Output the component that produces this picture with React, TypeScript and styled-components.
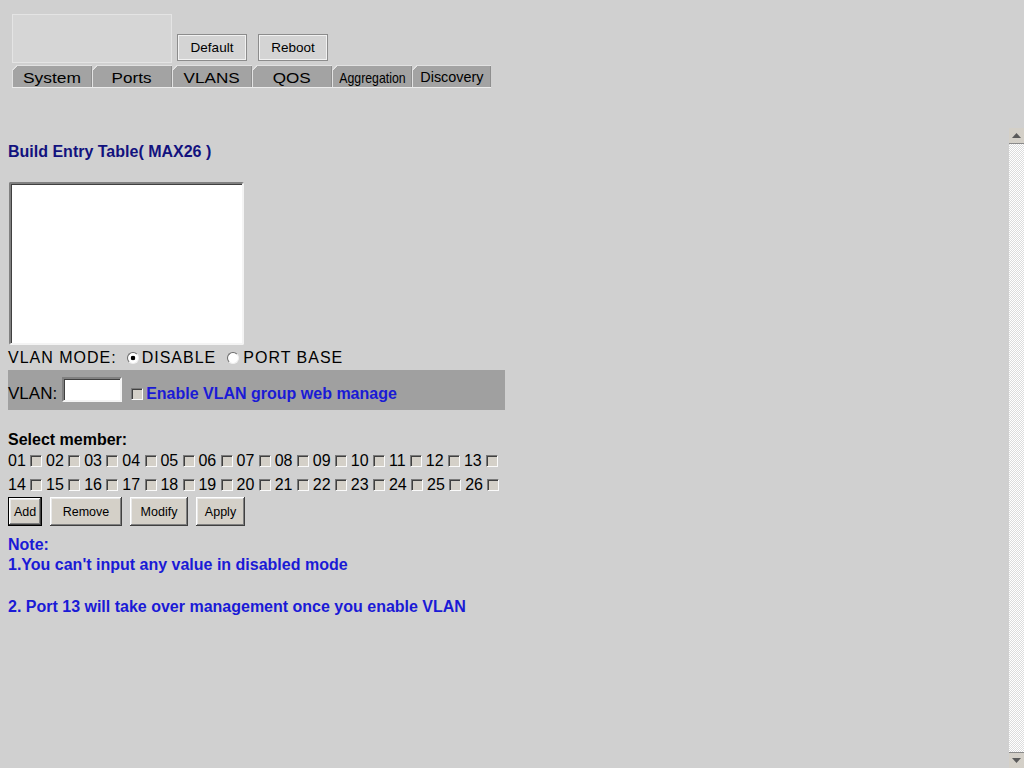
import React from "react";
import styled, { createGlobalStyle } from "styled-components";

const GlobalStyle = createGlobalStyle`
    html, body {
        margin: 0;
        padding: 0;
        background: #d0d0d0;
    }
    body {
        font-family: "Liberation Sans", Arial, sans-serif;
        color: #000;
    }
`;

const Page = styled.div`
    width: 1024px;
    height: 768px;
    display: flex;
    flex-direction: column;
    overflow: hidden;
    background: #d0d0d0;
`;

/* ---------- top frame ---------- */

const Header = styled.header`
    height: 128px;
    flex-shrink: 0;
    box-sizing: border-box;
    padding: 14px 0 0 12px;
`;

const TopRow = styled.div`
    display: flex;
    align-items: flex-end;
`;

const LogoBox = styled.div`
    width: 160px;
    height: 49px;
    box-sizing: border-box;
    background: #d6d6d6;
    border: 1px solid #e4e4e4;
`;

const HeadButtons = styled.div`
    display: flex;
    gap: 11px;
    margin: 0 0 2px 5px;
`;

const HeadButton = styled.button`
    width: 70px;
    height: 27px;
    padding: 0;
    box-sizing: border-box;
    background: #d4d4d4;
    border: 1px solid #8c8c8c;
    box-shadow: inset 0 0 0 1px #f2f2f2;
    font-family: "Liberation Sans", Arial, sans-serif;
    font-size: 13.5px;
    color: #000;
`;

const TabBar = styled.nav`
    display: flex;
    width: 479px;
    margin-top: 2px;
    border-bottom: 1px solid #ececec;
`;

const Tab = styled.div<{ $width: number }>`
    width: ${(p) => p.$width}px;
    height: 22px;
    box-sizing: border-box;
    padding-top: 2px;
    display: flex;
    align-items: center;
    justify-content: center;
    background: linear-gradient(135deg, #e6e6e6 0 4.4px, #a3a3a3 4.4px);
    box-shadow: inset 1px 1px 0 #e2e2e2, inset -1px 0 0 #8e8e8e;
    clip-path: polygon(0 5px, 5px 0, 100% 0, 100% 100%, 0 100%);
    overflow: hidden;
`;

const TabLabel = styled.span<{ $scale: number; $lift?: number }>`
    display: inline-block;
    font-size: 15px;
    line-height: 15px;
    white-space: nowrap;
    color: #000;
    transform: translateY(${(p) => -(p.$lift ?? 0)}px) scaleX(${(p) => p.$scale});
`;

/* ---------- main frame ---------- */

const Frame = styled.div`
    flex: 1;
    display: flex;
    min-height: 0;
`;

const Content = styled.main`
    flex: 1;
    box-sizing: border-box;
    padding: 15px 0 0 8px;
`;

const Title = styled.div`
    font-size: 16px;
    line-height: 18px;
    font-weight: bold;
    color: #12127e;
`;

const ListBox = styled.select`
    display: block;
    width: 235px;
    height: 163px;
    margin: 21px 0 0 1px;
    box-sizing: border-box;
    background: #fff;
    border: 2px solid;
    border-color: #808080 #f4f4f4 #f4f4f4 #808080;
    box-shadow: inset 1px 1px 0 #404040;
    outline: none;
    overflow: hidden;
`;

const ModeRow = styled.div`
    display: flex;
    align-items: center;
    height: 18px;
    margin-top: 4px;
    font-size: 16px;
    letter-spacing: 1px;
    white-space: nowrap;
`;

const Radio = styled.input.attrs({ type: "radio" })<{ $ml: number; $mr: number }>`
    appearance: none;
    width: 12px;
    height: 12px;
    margin: 0 ${(p) => p.$mr}px 0 ${(p) => p.$ml}px;
    box-sizing: border-box;
    border-radius: 50%;
    border: 1px solid;
    border-color: #6a6a6a #f0f0f0 #f0f0f0 #6a6a6a;
    background: #fff;
    &:checked {
        background: radial-gradient(circle, #000 0 2px, #fff 2.6px);
    }
`;

const VlanBar = styled.div`
    display: flex;
    align-items: flex-end;
    width: 497px;
    height: 40px;
    margin-top: 3px;
    box-sizing: border-box;
    padding-bottom: 8px;
    background: #a0a0a0;
`;

const BarLabel = styled.span`
    font-size: 17px;
    line-height: 17px;
`;

const TextInput = styled.input`
    width: 60px;
    height: 25px;
    margin-left: 5px;
    box-sizing: border-box;
    background: #fff;
    border: 2px solid;
    border-color: #808080 #f4f4f4 #f4f4f4 #808080;
    box-shadow: inset 1px 1px 0 #404040;
    outline: none;
`;

const Check = styled.input.attrs({ type: "checkbox" })<{ $ml: number; $mr: number; $mb?: number }>`
    appearance: none;
    width: 12px;
    height: 12px;
    margin: 0 ${(p) => p.$mr}px ${(p) => p.$mb ?? 0}px ${(p) => p.$ml}px;
    box-sizing: border-box;
    flex-shrink: 0;
    background: #d4d0c8;
    border: 1px solid;
    border-color: #7a7a7a #fafafa #fafafa #7a7a7a;
    box-shadow: inset 1px 1px 0 #404040;
`;

const BlueText = styled.span`
    font-size: 16px;
    line-height: 16px;
    font-weight: bold;
    color: #1a1ad6;
    white-space: nowrap;
`;

const SectionLabel = styled.div`
    margin-top: 21px;
    font-size: 16px;
    line-height: 18px;
    font-weight: bold;
`;

const MemberRow = styled.div`
    display: flex;
    height: 24px;
    align-items: center;
    font-size: 16px;
`;

const MemberItem = styled.label`
    display: flex;
    align-items: center;
`;

const Actions = styled.div`
    display: flex;
    gap: 8px;
`;

const ActionButton = styled.button<{ $width: number; $primary?: boolean }>`
    width: ${(p) => p.$width}px;
    height: 29px;
    padding: 0;
    box-sizing: border-box;
    background: #d4d0c8;
    border: ${(p) => (p.$primary ? "1px solid #000" : "none")};
    box-shadow: inset -1px -1px 0 #404040, inset 1px 1px 0 #fff, inset -2px -2px 0 #808080,
        inset 2px 2px 0 #e8e8e8;
    font-family: "Liberation Sans", Arial, sans-serif;
    font-size: 12.5px;
    color: #000;
`;

const Notes = styled.div`
    margin-top: 9px;
    font-size: 16px;
    line-height: 20px;
    font-weight: bold;
    color: #1a1ad6;
`;

const NoteLine = styled.div<{ $gap?: number }>`
    margin-top: ${(p) => p.$gap ?? 0}px;
`;

/* ---------- scrollbar ---------- */

const ScrollBar = styled.div`
    width: 15px;
    display: flex;
    flex-direction: column;
    flex-shrink: 0;
`;

const ScrollArrow = styled.div<{ $edge: "top" | "bottom" }>`
    height: 16px;
    display: flex;
    align-items: center;
    justify-content: center;
    background: #d4d0c8;
    border-${(p) => (p.$edge === "top" ? "bottom" : "top")}: 1px solid #8a8a8a;
    box-sizing: border-box;
`;

const ScrollTrack = styled.div`
    flex: 1;
    background: repeating-conic-gradient(#ffffff 0 25%, #dcdcdc 0 50%) 0 0 / 2px 2px;
`;

const Arrow = ({ down }: { down?: boolean }) => (
    <svg width="9" height="5" viewBox="0 0 9 5">
        <path d={down ? "M0 0H9L4.5 5Z" : "M0 5H9L4.5 0Z"} fill="#5a5a5a" />
    </svg>
);

const tabs = [
    { label: "System", width: 80, scale: 1.16 },
    { label: "Ports", width: 80, scale: 1.14 },
    { label: "VLANS", width: 80, scale: 1.14 },
    { label: "QOS", width: 80, scale: 1.14 },
    { label: "Aggregation", width: 80, scale: 0.82 },
    { label: "Discovery", width: 79, scale: 0.96, lift: 1 },
];

const ports = Array.from({ length: 26 }, (_, i) => String(i + 1).padStart(2, "0"));

export default function App() {
    return (
        <Page>
            <GlobalStyle />
            <Header>
                <TopRow>
                    <LogoBox />
                    <HeadButtons>
                        <HeadButton>Default</HeadButton>
                        <HeadButton>Reboot</HeadButton>
                    </HeadButtons>
                </TopRow>
                <TabBar>
                    {tabs.map((t) => (
                        <Tab key={t.label} $width={t.width}>
                            <TabLabel $scale={t.scale} $lift={t.lift}>
                                {t.label}
                            </TabLabel>
                        </Tab>
                    ))}
                </TabBar>
            </Header>
            <Frame>
                <Content>
                    <Title>Build Entry Table( MAX26 )</Title>
                    <ListBox size={10} multiple />
                    <ModeRow>
                        VLAN MODE:
                        <Radio name="mode" defaultChecked $ml={10} $mr={3} />
                        DISABLE
                        <Radio name="mode" $ml={11} $mr={4} />
                        PORT BASE
                    </ModeRow>
                    <VlanBar>
                        <BarLabel>VLAN:</BarLabel>
                        <TextInput />
                        <Check $ml={9} $mr={3} $mb={2} />
                        <BlueText>Enable VLAN group web manage</BlueText>
                    </VlanBar>
                    <SectionLabel>Select member:</SectionLabel>
                    {[ports.slice(0, 13), ports.slice(13)].map((row, r) => (
                        <MemberRow key={r}>
                            {row.map((p) => (
                                <MemberItem key={p}>
                                    {p}
                                    <Check $ml={4.5} $mr={3.8} />
                                </MemberItem>
                            ))}
                        </MemberRow>
                    ))}
                    <Actions>
                        <ActionButton $width={34} $primary>
                            Add
                        </ActionButton>
                        <ActionButton $width={72}>Remove</ActionButton>
                        <ActionButton $width={58}>Modify</ActionButton>
                        <ActionButton $width={49}>Apply</ActionButton>
                    </Actions>
                    <Notes>
                        <NoteLine>Note:</NoteLine>
                        <NoteLine>1.You can't input any value in disabled mode</NoteLine>
                        <NoteLine $gap={22}>2. Port 13 will take over management once you enable VLAN</NoteLine>
                    </Notes>
                </Content>
                <ScrollBar>
                    <ScrollArrow $edge="top">
                        <Arrow />
                    </ScrollArrow>
                    <ScrollTrack />
                    <ScrollArrow $edge="bottom">
                        <Arrow down />
                    </ScrollArrow>
                </ScrollBar>
            </Frame>
        </Page>
    );
}
